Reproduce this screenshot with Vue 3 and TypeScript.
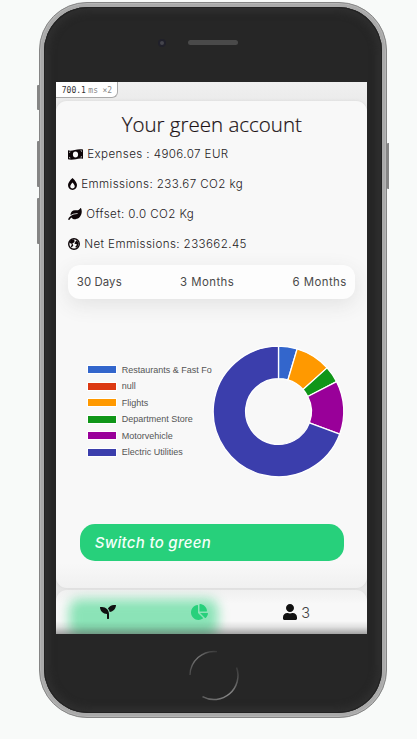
<script setup lang="ts">
interface Slice { label: string; color: string; from: number; to: number }

const slices: Slice[] = [
  { label: 'Restaurants & Fast Fo', color: '#3366cc', from: 0, to: 16.6 },
  { label: 'null', color: '#dc3912', from: 16.6, to: 16.6 },
  { label: 'Flights', color: '#ff9900', from: 16.6, to: 48.1 },
  { label: 'Department Store', color: '#109618', from: 48.1, to: 62.8 },
  { label: 'Motorvehicle', color: '#990099', from: 62.8, to: 110.2 },
  { label: 'Electric Utilities', color: '#3b3eac', from: 110.2, to: 360 },
]

const periods = ['30 Days', '3 Months', '6 Months']

function point(deg: number, r: number): string {
  const a = (deg * Math.PI) / 180
  return `${(66.5 + r * Math.sin(a)).toFixed(2)} ${(66.5 - r * Math.cos(a)).toFixed(2)}`
}

function arc(s: Slice): string {
  const large = s.to - s.from > 180 ? 1 : 0
  return `M${point(s.from, 65.3)}A65.3 65.3 0 ${large} 1 ${point(s.to, 65.3)}L${point(s.to, 32.9)}A32.9 32.9 0 ${large} 0 ${point(s.from, 32.9)}Z`
}

const drawn = slices.filter((s) => s.to > s.from)
</script>

<template>
  <div class="page">
    <div class="phone">
      <i class="key mute"></i><i class="key up"></i><i class="key down"></i><i class="key power"></i>
      <div class="bezel">
        <header class="top"><i class="camera"></i><i class="speaker"></i></header>
        <main class="screen">
          <div class="profiler"><b>700.1</b><span>ms</span><span class="times">×2</span></div>
          <section class="account">
            <h1>Your green account</h1>
            <div class="stats">
              <p>
                <svg width="15" height="11" viewBox="0 0 15 11"><path fill-rule="evenodd" d="M0 1.3C4 2.7 9-.9 15 .5V9.8C10 8.3 6 11.8 0 10.3ZM7.5 2.5C5.9 2.5 4.9 3.8 4.9 5.5S5.9 8.5 7.5 8.5 10.1 7.2 10.1 5.5 9.1 2.5 7.5 2.5ZM1.2 2.7V4.1L2.8 2.8ZM13.8 1.6 12.2 1.5 13.8 3ZM1.2 7.8V9.3L2.8 9.2ZM13.8 7 12.2 8.3 13.8 8.5Z" /></svg>
                <span>Expenses : 4906.07 EUR</span>
              </p>
              <p>
                <svg width="9" height="12" viewBox="0 0 384 512"><path d="M192 0C79.7 101.3 0 220.9 0 300.5 0 425 79 512 192 512s192-87 192-211.5c0-79.9-80.2-199.6-192-300.5zm0 448c-56.5 0-96-39-96-94.8 0-13.5 4.6-61.5 96-161.2 91.5 99.7 96 147.7 96 161.2 0 55.8-39.5 94.8-96 94.8z" /></svg>
                <span>Emmissions: 233.67 CO2 kg</span>
              </p>
              <p>
                <svg width="14" height="12" viewBox="0 0 576 512"><path d="M546.2 9.7c-5.6-12.5-21.6-13-28.3-1.2C486.9 62.4 431.4 96 368 96h-80C182 96 96 182 96 288c0 7 .8 13.7 1.5 20.5C161.3 262.8 253.4 224 384 224c8.8 0 16 7.2 16 16s-7.2 16-16 16C132.6 256 26 410.1 2.4 468c-6.6 16.3 1.2 34.9 17.5 41.6 16.4 6.8 35-1.1 41.8-17.3 1.5-3.6 20.9-47.9 71.9-90.6 32.4 43.9 94 85.8 174.9 77.2C465.5 467.5 576 326.7 576 154.3c0-50.2-10.8-102.2-29.8-144.6z" /></svg>
                <span>Offset: 0.0 CO2 Kg</span>
              </p>
              <p>
                <svg width="12" height="12" viewBox="0 0 12 12"><circle cx="6" cy="6" r="5.3" fill="none" stroke="currentColor" stroke-width="1.4" /><path d="M5.5 1.2 2.7 2.3 1.2 5 3.3 5.6 3.8 6.8 2.9 8.6 3.3 9.6 4.3 8.5 5.3 7.9 4.9 6.6 4.3 5.5 5.9 4.5 6.8 2.9ZM8.2 2.2 7.2 4.2 6.3 5.2 7.4 6.1 8.6 6 8.7 7.2 7.4 8.4 7.9 9.8 9.6 8.9 10.7 5.5 9.6 3.2Z" /></svg>
                <span>Net Emmissions: 233662.45</span>
              </p>
            </div>
            <div class="periods"><span v-for="p in periods" :key="p">{{ p }}</span></div>
            <div class="chart">
              <ul>
                <li v-for="s in slices" :key="s.label"><i :style="{ background: s.color }"></i>{{ s.label }}</li>
              </ul>
              <svg width="132" height="133" viewBox="0 0 132 133">
                <path v-for="s in drawn" :key="s.label" :d="arc(s)" :fill="s.color" stroke="#fff" stroke-width="1.3" />
              </svg>
            </div>
            <button class="switch">Switch to green</button>
          </section>
          <nav>
            <i class="glow"></i>
            <a><svg width="16" height="16" viewBox="0 0 512 512"><path d="M64 96H0c0 123.7 100.3 224 224 224v144c0 8.8 7.2 16 16 16h32c8.8 0 16-7.2 16-16V320C288 196.3 187.7 96 64 96zm384-64c-84.2 0-157.4 46.5-195.7 115.2 27.7 30.2 48.2 66.9 59 107.6C424 243.1 512 147.9 512 32h-64z" /></svg></a>
            <a class="active"><svg width="17" height="16" viewBox="0 0 544 512"><path d="M527.79 288H290.5l158.03 158.03c6.04 6.04 15.98 6.53 22.19.68 38.7-36.46 65.32-85.61 73.13-140.86 1.34-9.46-6.51-17.85-16.06-17.85zm-15.83-64.8C503.72 103.74 408.26 8.28 288.8.04 279.68-.59 272 7.1 272 16.24V240h223.77c9.14 0 16.82-7.68 16.19-16.8zM224 288V50.71c0-9.55-8.39-17.4-17.84-16.06C86.99 51.49-4.1 155.6.14 280.37 4.5 408.51 114.83 513.59 243.03 511.98c50.4-.63 96.97-16.87 135.26-44.03 7.9-5.6 8.42-17.23 1.57-24.08L224 288z" /></svg></a>
            <a class="user"><svg width="14" height="16" viewBox="0 0 448 512"><path d="M224 256c70.7 0 128-57.3 128-128S294.7 0 224 0 96 57.3 96 128s57.3 128 128 128zm89.6 32h-16.7c-22.2 10.2-46.9 16-72.9 16s-50.6-5.8-72.9-16h-16.7C60.2 288 0 348.2 0 422.4V464c0 26.5 21.5 48 48 48h352c26.5 0 48-21.5 48-48v-41.6c0-74.2-60.2-134.4-134.4-134.4z" /></svg><span>3</span></a>
          </nav>
        </main>
        <footer class="bottom">
          <svg width="52" height="52" viewBox="0 0 52 52" fill="none">
            <defs>
              <linearGradient id="ringTop" x1="0" y1="1" x2="1" y2="0"><stop stop-color="#484848" /><stop offset=".5" stop-color="#777" /><stop offset="1" stop-color="#383838" /></linearGradient>
              <linearGradient id="ringLow" x1="1" y1="0" x2="0" y2="1"><stop stop-color="#383838" /><stop offset=".55" stop-color="#8a8a8a" /><stop offset="1" stop-color="#5a5a5a" /></linearGradient>
            </defs>
            <path d="M2 25A24 24 0 0 1 29 1.7" stroke="url(#ringTop)" stroke-width="1.3" />
            <path d="M48.6 17.5A24 24 0 0 1 14.5 46.6" stroke="url(#ringLow)" stroke-width="1.5" />
          </svg>
        </footer>
      </div>
    </div>
  </div>
</template>

<style>
body { margin: 0; background: #f8faf9; overflow: hidden; }
</style>

<style scoped>
* { box-sizing: border-box; }
.page { height: 739px; padding: 2px 0 0 38.5px; background: #f8faf9; }
.phone { position: relative; width: 348.5px; height: 715.5px; padding: 4px; border-radius: 48px; background: #aaa; border: 1px solid #858585; box-shadow: inset 0 0 0 1px #b5b5b5; }
.key { position: absolute; width: 2px; background: #858585; left: -3px; border-radius: 1px 0 0 1px; }
.mute { top: 82px; height: 25px; }
.up { top: 138px; height: 46px; }
.down { top: 195px; height: 46px; }
.power { top: 140px; height: 46px; left: auto; right: -3px; }
.bezel { height: 100%; border-radius: 44px; overflow: hidden; background: #262626; box-shadow: inset 0 0 0 1px #222, inset 0 0 7px 5px #2f2f2f; display: flex; flex-direction: column; align-items: center; }
.top { position: relative; height: 75px; width: 100%; flex: none; }
.camera { position: absolute; left: 114px; top: 32px; width: 8px; height: 8px; border-radius: 50%; border: 2px solid #20202a; background: #44444c; }
.speaker { position: absolute; left: 144.5px; top: 33px; width: 50px; height: 5px; border-radius: 3px; background: #4a4a4a; }
.screen { position: relative; flex: none; width: 311px; height: 552px; margin-right: 2px; overflow: hidden; padding-top: 19px; background: linear-gradient(#f0f0f0 0, #ebebeb 20px, #e6e6e6 100%); font-family: Inter, "Liberation Sans", sans-serif; color: #1b1114; }
.profiler { position: absolute; top: 0; left: 0; width: 62px; height: 16px; padding-left: 5.5px; border: 1px solid #aaa; border-width: 0 1px 1px 0; border-radius: 0 0 6px 0; background: #fff; font: 8px/17px "DejaVu Sans Mono", "Liberation Mono", monospace; color: #888; display: flex; }
.profiler b { color: #333; font-weight: 400; margin-right: 2.5px; }
.profiler .times { margin-left: 4.5px; }
.account { height: 487px; border-radius: 11px; background: linear-gradient(#f8f8f8 0, #f8f8f8 95%, #f0f0f0 100%); box-shadow: 0 0 3px #d5d5d5; display: flex; flex-direction: column; }
h1 { margin: 0; padding-top: 9px; height: 38px; text-align: center; font: 300 20.5px/28px "Open Sans", "Noto Sans", sans-serif; white-space: nowrap; -webkit-text-stroke: .2px #1b1114; }
.stats { padding-left: 12px; }
p { margin: 0; height: 30px; display: flex; align-items: center; gap: 4px; font-size: 11.6px; line-height: 14px; font-weight: 300; letter-spacing: .4px; white-space: nowrap; color: #251b1e; }
p svg { fill: currentColor; color: #0d0508; flex: none; }
.periods { height: 34px; margin: 6px 12px 0; padding: 0 8.5px; border-radius: 12px; background: #fdfdfd; box-shadow: 0 6px 20px #e2e2e2; display: flex; align-items: center; justify-content: space-between; font-size: 11.4px; letter-spacing: .45px; color: #494949; }
.periods span:first-child { letter-spacing: .1px; }
.chart { margin-top: 46px; height: 133px; padding: 0 24px 0 31px; display: flex; justify-content: space-between; }
ul { margin: 16.5px 0 0; padding: 0; list-style: none; font: 9px/16.5px "Liberation Sans", Arial, sans-serif; color: #555; white-space: nowrap; }
li { display: flex; height: 16.5px; align-items: center; }
li i { width: 30px; height: 9px; border: 1px solid #fff; margin-right: 4.5px; }
.chart svg { flex: none; overflow: visible; }
.switch { display: block; margin: 46px 23.5px 0; height: 37px; border: 0; border-radius: 15px; padding: 0 15px; text-align: left; background: #27d07b; color: #f4fff9; font: italic 500 15px Inter, sans-serif; letter-spacing: .3px; }
nav { position: relative; margin-top: 2px; height: 44px; border-radius: 11px 11px 0 0; background: linear-gradient(#f0f0f0, #f8f8f8 14px); overflow: hidden; display: grid; grid-template-columns: 104px 79px 1fr; padding-top: 14px; box-shadow: 0 0 2px #ddd; }
nav::after { content: ""; position: absolute; left: 0; right: 0; bottom: 0; height: 13px; background: linear-gradient(#0000, #00000018 45%, #00000058); }
.glow { position: absolute; left: 13px; top: 9px; width: 149px; height: 38px; border-radius: 10px; background: #27d07b; opacity: .52; filter: blur(6px); }
a { position: relative; display: flex; justify-content: center; height: 16px; color: #111; }
a svg { fill: currentColor; }
.active { color: #27d07b; }
.user { justify-content: flex-start; padding-left: 43.5px; gap: 4.5px; align-items: center; font-size: 14.5px; font-weight: 300; }
.user span { color: #444; }
.bottom { height: 81px; width: 100%; display: flex; justify-content: center; padding: 16px 0 0 2px; }
</style>
